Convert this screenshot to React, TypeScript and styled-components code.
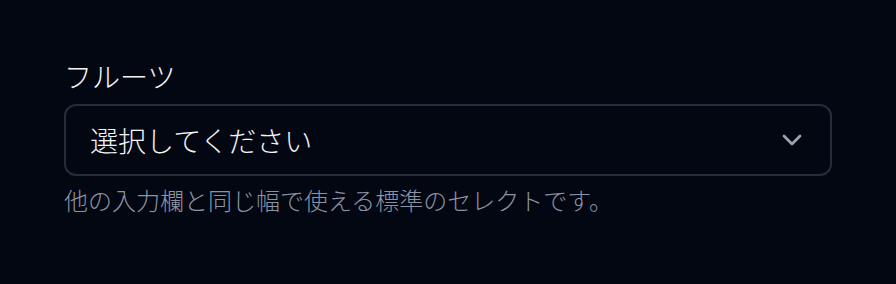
import styled, { createGlobalStyle } from "styled-components";

const GlobalStyle = createGlobalStyle`
    html, body {
        margin: 0;
        padding: 0;
        background: #030712;
    }
    body {
        font-family: "Noto Sans CJK JP", "Noto Sans", sans-serif;
        -webkit-font-smoothing: antialiased;
    }
`;

const Page = styled.div`
    width: 896px;
    height: 284px;
    box-sizing: border-box;
    padding: 56px 64px 0;
    background: #030712;
`;

const Field = styled.div`
    display: flex;
    flex-direction: column;
`;

const Label = styled.label`
    font-size: 28px;
    font-weight: 300;
    line-height: 40px;
    color: #f3f4f6;
    margin-bottom: 8px;
`;

const SelectButton = styled.button`
    display: flex;
    align-items: center;
    justify-content: space-between;
    width: 768px;
    height: 72px;
    box-sizing: border-box;
    padding: 0 22px 0 24px;
    background: transparent;
    border: 2px solid #252d3b;
    border-radius: 12px;
    font-family: inherit;
    font-size: 28px;
    font-weight: 300;
    color: #f3f4f6;
    cursor: pointer;
    text-align: left;
`;

const Chevron = styled.svg`
    width: 32px;
    height: 32px;
    color: #9ca3af;
    flex-shrink: 0;
`;

const Helper = styled.p`
    margin: 8px 0 0;
    font-size: 24px;
    font-weight: 300;
    line-height: 32px;
    color: #8b94a5;
`;

export default function App() {
    return (
        <>
            <GlobalStyle />
            <Page>
                <Field>
                    <Label>フルーツ</Label>
                    <SelectButton type="button">
                        <span>選択してください</span>
                        <Chevron
                            viewBox="0 0 24 24"
                            fill="none"
                            stroke="currentColor"
                            strokeWidth={2}
                            strokeLinecap="round"
                            strokeLinejoin="round"
                        >
                            <path d="m6 9 6 6 6-6" />
                        </Chevron>
                    </SelectButton>
                    <Helper>他の入力欄と同じ幅で使える標準のセレクトです。</Helper>
                </Field>
            </Page>
        </>
    );
}
